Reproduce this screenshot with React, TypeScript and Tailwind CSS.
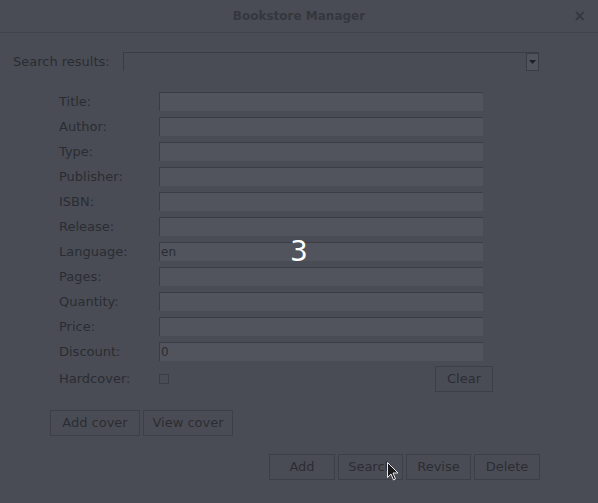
import React from 'react';

const fields = [
    { label: 'Title:', value: '' },
    { label: 'Author:', value: '' },
    { label: 'Type:', value: '' },
    { label: 'Publisher:', value: '' },
    { label: 'ISBN:', value: '' },
    { label: 'Release:', value: '' },
    { label: 'Language:', value: 'en' },
    { label: 'Pages:', value: '' },
    { label: 'Quantity:', value: '' },
    { label: 'Price:', value: '' },
    { label: 'Discount:', value: '0' },
];

const Btn = ({ children, className }: { children: React.ReactNode; className?: string }) => (
    <button
        type="button"
        className={'h-[26px] border border-[#3d3f46] bg-[#4a4c55] text-[13px] text-[#2b2d33] ' + (className ?? '')}
    >
        {children}
    </button>
);

const App = () => {
    return (
        <div className="relative w-[598px] h-[503px] bg-[#494c55] text-[#2a2c32] overflow-hidden" style={{ fontFamily: '"DejaVu Sans", sans-serif' }}>
            {/* title bar */}
            <div className="relative h-[33px] border-b border-[#41434b] flex items-center justify-center">
                <span className="text-[12px] font-bold text-[#35373e]">Bookstore Manager</span>
                <span className="absolute right-[12px] top-[5px] text-[15px] font-bold text-[#35373e]">×</span>
            </div>

            {/* search results */}
            <div className="flex items-center h-[19px] mt-[19px] pl-[13px]">
                <span className="w-[110px] text-[13px] leading-[19px]">Search results:</span>
                <div className="w-[416px] h-[19px] border-t border-l border-[#3a3c43] bg-[#494c55] flex justify-end">
                    <div className="w-[13px] h-[18px] border border-[#3a3c43] bg-[#50535c] flex items-center justify-center">
                        <svg width="7" height="4" viewBox="0 0 7 4">
                            <path d="M0 0H7L3.5 4Z" fill="#1e2025" />
                        </svg>
                    </div>
                </div>
            </div>

            {/* form */}
            <div className="mt-[21px] pl-[59px] flex flex-col gap-[6px]">
                {fields.map(f => (
                    <div key={f.label} className="flex items-center h-[19px]">
                        <span className="w-[100px] text-[13px] leading-[19px]">{f.label}</span>
                        <div className="w-[324px] h-[19px] border-t border-l border-[#3b3d44] bg-[#51545d] flex items-center pl-[1px] text-[12px]">
                            {f.value}
                        </div>
                    </div>
                ))}
                <div className="flex items-center h-[26px] mt-[-1px]">
                    <span className="w-[100px] text-[13px]">Hardcover:</span>
                    <div className="w-[10px] h-[10px] border border-[#3b3d44] bg-[#494c55]" />
                    <div className="flex-1" />
                    <Btn className="w-[58px] mr-[105px]">Clear</Btn>
                </div>
            </div>

            <div className="mt-[18px] pl-[50px] flex gap-[3px]">
                <Btn className="w-[90px]">Add cover</Btn>
                <Btn className="w-[90px]">View cover</Btn>
            </div>

            <div className="mt-[18px] pl-[269px] flex gap-[3px]">
                <Btn className="w-[66px]">Add</Btn>
                <Btn className="w-[65px]">Search</Btn>
                <Btn className="w-[65px]">Revise</Btn>
                <Btn className="w-[66px]">Delete</Btn>
            </div>

            {/* countdown overlay */}
            <span className="absolute left-[290px] top-[238px] text-[28px] leading-none text-white">3</span>

            {/* mouse cursor */}
            <svg className="absolute left-[387px] top-[462px]" width="12" height="19" viewBox="0 0 12 19">
                <path d="M0.5 0.5V15.5L4 12L6.5 18L8.5 17L6 11H11Z" fill="#1a1a1a" stroke="#e8e8e8" strokeWidth="1" />
            </svg>
        </div>
    );
};

export default App;
